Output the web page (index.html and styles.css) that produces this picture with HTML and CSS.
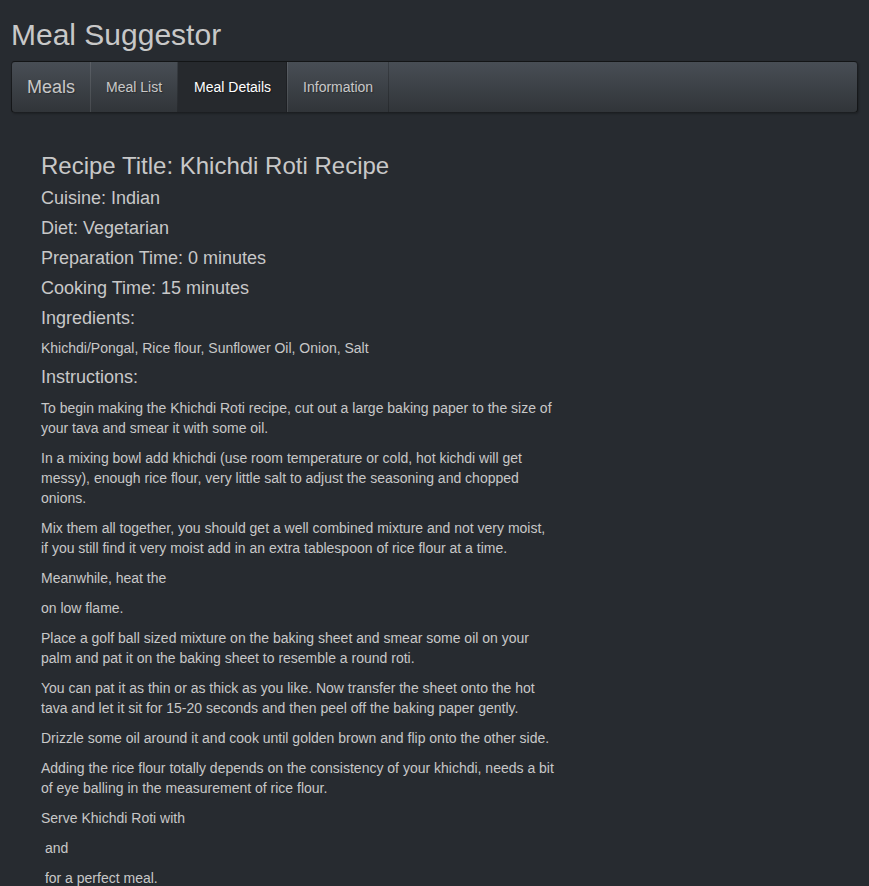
FILE: index.html
```html
<!DOCTYPE html>
<html lang="en">
<head>
<meta charset="utf-8">
<title>Meal Suggestor</title>
<link rel="stylesheet" href="styles.css">
</head>
<body>
<div class="app">
  <h1 class="site-title">Meal Suggestor</h1>
  <nav class="navbar">
    <a class="brand" href="#">Meals</a>
    <ul class="nav">
      <li><a href="#">Meal List</a></li>
      <li class="active"><a href="#">Meal Details</a></li>
      <li><a href="#">Information</a></li>
    </ul>
  </nav>
  <main class="recipe">
    <h3 class="recipe-title">Recipe Title: Khichdi Roti Recipe</h3>
    <h4 class="meta">Cuisine: Indian</h4>
    <h4 class="meta">Diet: Vegetarian</h4>
    <h4 class="meta">Preparation Time: 0 minutes</h4>
    <h4 class="meta">Cooking Time: 15 minutes</h4>
    <h4 class="meta">Ingredients:</h4>
    <p>Khichdi/Pongal, Rice flour, Sunflower Oil, Onion, Salt</p>
    <h4 class="meta">Instructions:</h4>
    <p>To begin making the Khichdi Roti recipe, cut out a large baking paper to the size of your tava and smear it with some oil.</p>
    <p>In a mixing bowl add khichdi (use room temperature or cold, hot kichdi will get messy), enough rice flour, very little salt to adjust the seasoning and chopped onions.</p>
    <p>Mix them all together, you should get a well combined mixture and not very moist, if you still find it very moist add in an extra tablespoon of rice flour at a time.</p>
    <p>Meanwhile, heat the</p>
    <p>on low flame.</p>
    <p>Place a golf ball sized mixture on the baking sheet and smear some oil on your palm and pat it on the baking sheet to resemble a round roti.</p>
    <p>You can pat it as thin or as thick as you like. Now transfer the sheet onto the hot tava and let it sit for 15-20 seconds and then peel off the baking paper gently.</p>
    <p>Drizzle some oil around it and cook until golden brown and flip onto the other side.</p>
    <p>Adding the rice flour totally depends on the consistency of your khichdi, needs a bit of eye balling in the measurement of rice flour.</p>
    <p>Serve Khichdi Roti with</p>
    <p>&nbsp;and</p>
    <p>&nbsp;for a perfect meal.</p>
  </main>
</div>
</body>
</html>
```
FILE: styles.css
```css
html, body {
  margin: 0;
  padding: 0;
  background: #272b30;
}

body {
  font-family: "Liberation Sans", Arial, Helvetica, sans-serif;
  font-size: 14px;
  line-height: 20px;
  color: #c8c8c8;
}

.app {
  padding: 0 11px;
}

.site-title {
  font-size: 30px;
  font-weight: 400;
  line-height: 33px;
  margin: 18px 0 10px 0;
  color: #c8c8c8;
}

.navbar {
  display: flex;
  align-items: stretch;
  height: 50px;
  border: 1px solid rgba(0, 0, 0, 0.6);
  border-radius: 4px;
  background-image: linear-gradient(#484e55, #3a3f44 60%, #313539);
  text-shadow: 1px 1px 1px rgba(0, 0, 0, 0.3);
  box-shadow: 1px 1px 2px rgba(0, 0, 0, 0.25);
}

.brand {
  display: block;
  padding: 15px;
  font-size: 18px;
  line-height: 20px;
  color: #c8c8c8;
  text-decoration: none;
}

.nav {
  display: flex;
  margin: 0;
  padding: 0;
  list-style: none;
}

.nav li a {
  display: block;
  padding: 15px;
  line-height: 20px;
  color: #c8c8c8;
  text-decoration: none;
  border-left: 1px solid rgba(255, 255, 255, 0.1);
  border-right: 1px solid rgba(0, 0, 0, 0.2);
}

.nav li.active a {
  color: #ffffff;
  background-color: #26292d;
  border-left-color: transparent;
}

.recipe {
  display: flow-root;
  width: 513px;
  padding: 0 30px;
  margin-top: 20px;
}

.recipe-title {
  font-size: 24px;
  font-weight: 400;
  line-height: 1.1;
  margin: 20px 0 10px;
}

.meta {
  font-size: 18px;
  font-weight: 400;
  line-height: 1.1;
  margin: 10px 0;
}

.recipe p {
  margin: 0 0 10px;
}
```
